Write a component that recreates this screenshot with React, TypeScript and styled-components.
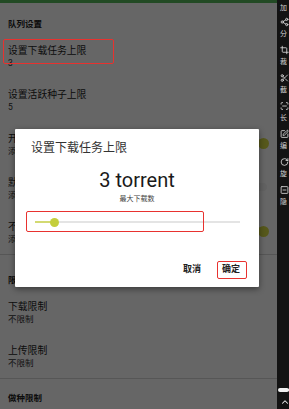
import { FC } from "react";
import styled, { createGlobalStyle } from "styled-components";
import { Share2, Crop, Scissors, ScanLine, SquarePen, RotateCw, SquareMinus, ChevronUp } from "lucide-react";

const GlobalStyle = createGlobalStyle`
  html, body {
    margin: 0;
    padding: 0;
    background: #121212;
  }
  body {
    font-family: Roboto, "Noto Sans CJK SC", sans-serif;
  }
`;

type SettingProps = {
  title: string;
  value: string;
  toggle?: "on" | "off";
};

const Setting: FC<SettingProps> = ({ title, value, toggle }) => (
  <ItemRow>
    <ItemText>
      <ItemTitle>{title}</ItemTitle>
      <ItemValue>{value}</ItemValue>
    </ItemText>
    {toggle && (
      <Switch $on={toggle === "on"}>
        <Knob $on={toggle === "on"} />
      </Switch>
    )}
  </ItemRow>
);

const sideTools = [
  { icon: Share2, label: "分" },
  { icon: Crop, label: "裁" },
  { icon: Scissors, label: "截" },
  { icon: ScanLine, label: "长" },
  { icon: SquarePen, label: "编" },
  { icon: RotateCw, label: "旋" },
  { icon: SquareMinus, label: "隐" },
];

const sliderMin = 1;
const sliderMax = 22;
const sliderValue = 3;

export default function App() {
  const pct = ((sliderValue - sliderMin) / (sliderMax - sliderMin)) * 100;

  return (
    <>
      <GlobalStyle />
      <Screen>
        <Main>
          <StatusBar />
          <List>
            <SectionHeader $top={15}>队列设置</SectionHeader>
            <Setting title="设置下载任务上限" value="3" />
            <Setting title="设置活跃种子上限" value="5" />
            <Setting title="开启下载队列" value="添加任务时自动排队" toggle="on" />
            <Setting title="默认添加至队首" value="添加的新任务置于顶部" toggle="off" />
            <Setting title="不计入慢速任务" value="添加任务时忽略慢速" toggle="on" />
            <Divider />
            <SectionHeader $top={19}>限速设置</SectionHeader>
            <Setting title="下载限制" value="不限制" />
            <Setting title="上传限制" value="不限制" />
            <Divider />
            <SectionHeader $top={13}>做种限制</SectionHeader>
          </List>

          <Scrim />

          <Dialog>
            <DialogTitle>设置下载任务上限</DialogTitle>
            <BigValue>{sliderValue} torrent</BigValue>
            <Caption>最大下载数</Caption>
            <Slider>
              <Track />
              <Fill style={{ width: `${pct}%` }} />
              <Thumb style={{ left: `${pct}%` }} />
            </Slider>
            <Actions>
              <TextButton>取消</TextButton>
              <TextButton>确定</TextButton>
            </Actions>
          </Dialog>

          <Mark $x={3} $y={39} $w={111} $h={25} />
          <Mark $x={26} $y={211} $w={178} $h={21} />
          <Mark $x={217} $y={261} $w={30} $h={18} />
        </Main>

        <SideBar>
          <SideLabel>加</SideLabel>
          {sideTools.map(({ icon: Icon, label }) => (
            <SideTool key={label}>
              <SideIcon>
                <Icon size={10} strokeWidth={2.2} />
              </SideIcon>
              <SideLabel>{label}</SideLabel>
            </SideTool>
          ))}
          <SideBottom>
            <SideDot />
            <ChevronUp size={10} strokeWidth={2.5} />
          </SideBottom>
        </SideBar>
      </Screen>
    </>
  );
}

const Screen = styled.div`
  display: flex;
  width: 289px;
  height: 409px;
  overflow: hidden;
`;

const Main = styled.div`
  position: relative;
  flex: 1;
  background: #ffffff;
  overflow: hidden;
`;

const StatusBar = styled.div`
  height: 3px;
  background: #55b85a;
`;

const List = styled.div`
  display: flex;
  flex-direction: column;
`;

const SectionHeader = styled.div<{ $top: number }>`
  padding: ${(p) => p.$top}px 8px 4px;
  font-size: 8.5px;
  line-height: 12px;
  font-weight: 700;
  color: #222;
`;

const ItemRow = styled.div`
  display: flex;
  align-items: flex-start;
  gap: 8px;
  height: 44px;
  box-sizing: border-box;
  padding: 11px 10px 0 8px;
`;

const ItemText = styled.div`
  display: flex;
  flex-direction: column;
  flex: 1;
  min-width: 0;
  overflow: hidden;
`;

const ItemTitle = styled.div`
  font-size: 9.8px;
  line-height: 12px;
  color: #242424;
  white-space: nowrap;
`;

const ItemValue = styled.div`
  font-size: 8.5px;
  line-height: 12px;
  color: #2e2e2e;
  white-space: nowrap;
`;

const Switch = styled.div<{ $on: boolean }>`
  position: relative;
  flex: none;
  width: 20px;
  height: 8px;
  margin-top: 6px;
  border-radius: 4px;
  background: ${(p) => (p.$on ? "#e3eaa0" : "#f4f4f4")};
`;

const Knob = styled.div<{ $on: boolean }>`
  position: absolute;
  top: -1.5px;
  ${(p) => (p.$on ? "right: -2px;" : "left: -2px;")}
  width: 11px;
  height: 11px;
  border-radius: 50%;
  background: ${(p) => (p.$on ? "#d8dc45" : "#f4f4f4")};
`;

const Divider = styled.div`
  height: 1px;
  background: #d7d7d7;
`;

const Scrim = styled.div`
  position: absolute;
  inset: 0;
  background: rgba(0, 0, 0, 0.6);
`;

const Dialog = styled.div`
  position: absolute;
  left: 15px;
  top: 129px;
  width: 244px;
  height: 158px;
  box-sizing: border-box;
  display: flex;
  flex-direction: column;
  padding-top: 12px;
  background: #ffffff;
  border-radius: 1px;
  box-shadow: 0 2px 6px rgba(0, 0, 0, 0.45);
`;

const DialogTitle = styled.div`
  padding-left: 16px;
  font-size: 12px;
  line-height: 14px;
  color: #333;
`;

const BigValue = styled.div`
  margin-top: 13px;
  text-align: center;
  font-family: Roboto, sans-serif;
  font-size: 20px;
  line-height: 24px;
  color: #1a1a1a;
`;

const Caption = styled.div`
  margin-top: 2px;
  text-align: center;
  font-size: 7px;
  line-height: 10px;
  color: #444;
`;

const Slider = styled.div`
  position: relative;
  height: 20px;
  margin: 8px 19px 0 20px;
`;

const Track = styled.div`
  position: absolute;
  left: 0;
  right: 0;
  top: 9px;
  height: 2px;
  background: #e4e4e4;
`;

const Fill = styled.div`
  position: absolute;
  left: 0;
  top: 9px;
  height: 2px;
  background: #d3da72;
`;

const Thumb = styled.div`
  position: absolute;
  top: 10px;
  width: 9px;
  height: 9px;
  margin-left: -4.5px;
  margin-top: -4.5px;
  border-radius: 50%;
  background: #c4ce3c;
`;

const Actions = styled.div`
  display: flex;
  justify-content: flex-end;
  align-items: center;
  gap: 21px;
  height: 20px;
  margin-top: 27px;
  padding-right: 19px;
`;

const TextButton = styled.div`
  font-size: 9px;
  line-height: 20px;
  font-weight: 700;
  color: #222;
`;

const Mark = styled.div<{ $x: number; $y: number; $w: number; $h: number }>`
  position: absolute;
  left: ${(p) => p.$x}px;
  top: ${(p) => p.$y}px;
  width: ${(p) => p.$w}px;
  height: ${(p) => p.$h}px;
  box-sizing: border-box;
  border: 1.5px solid #e8322f;
  border-radius: 2px;
`;

const SideBar = styled.div`
  display: flex;
  flex-direction: column;
  width: 12px;
  box-sizing: border-box;
  padding: 3px 0 2px 3px;
  background: #131313;
  color: #dcdcdc;
  overflow: hidden;
`;

const SideTool = styled.div`
  display: flex;
  flex-direction: column;
  margin-top: 4px;
`;

const SideIcon = styled.div`
  display: flex;
  align-items: center;
  height: 14px;
`;

const SideLabel = styled.div`
  height: 10px;
  font-size: 7px;
  line-height: 10px;
  white-space: nowrap;
  color: #cfcfcf;
  &:first-child {
    margin-bottom: -2px;
  }
`;

const SideBottom = styled.div`
  display: flex;
  flex-direction: column;
  gap: 6px;
  margin-top: auto;
  color: #f0f0f0;
`;

const SideDot = styled.div`
  width: 9px;
  height: 2px;
  border-radius: 1px;
  background: #f0f0f0;
  box-shadow: -1px 0 0 1px #f0f0f0;
`;
